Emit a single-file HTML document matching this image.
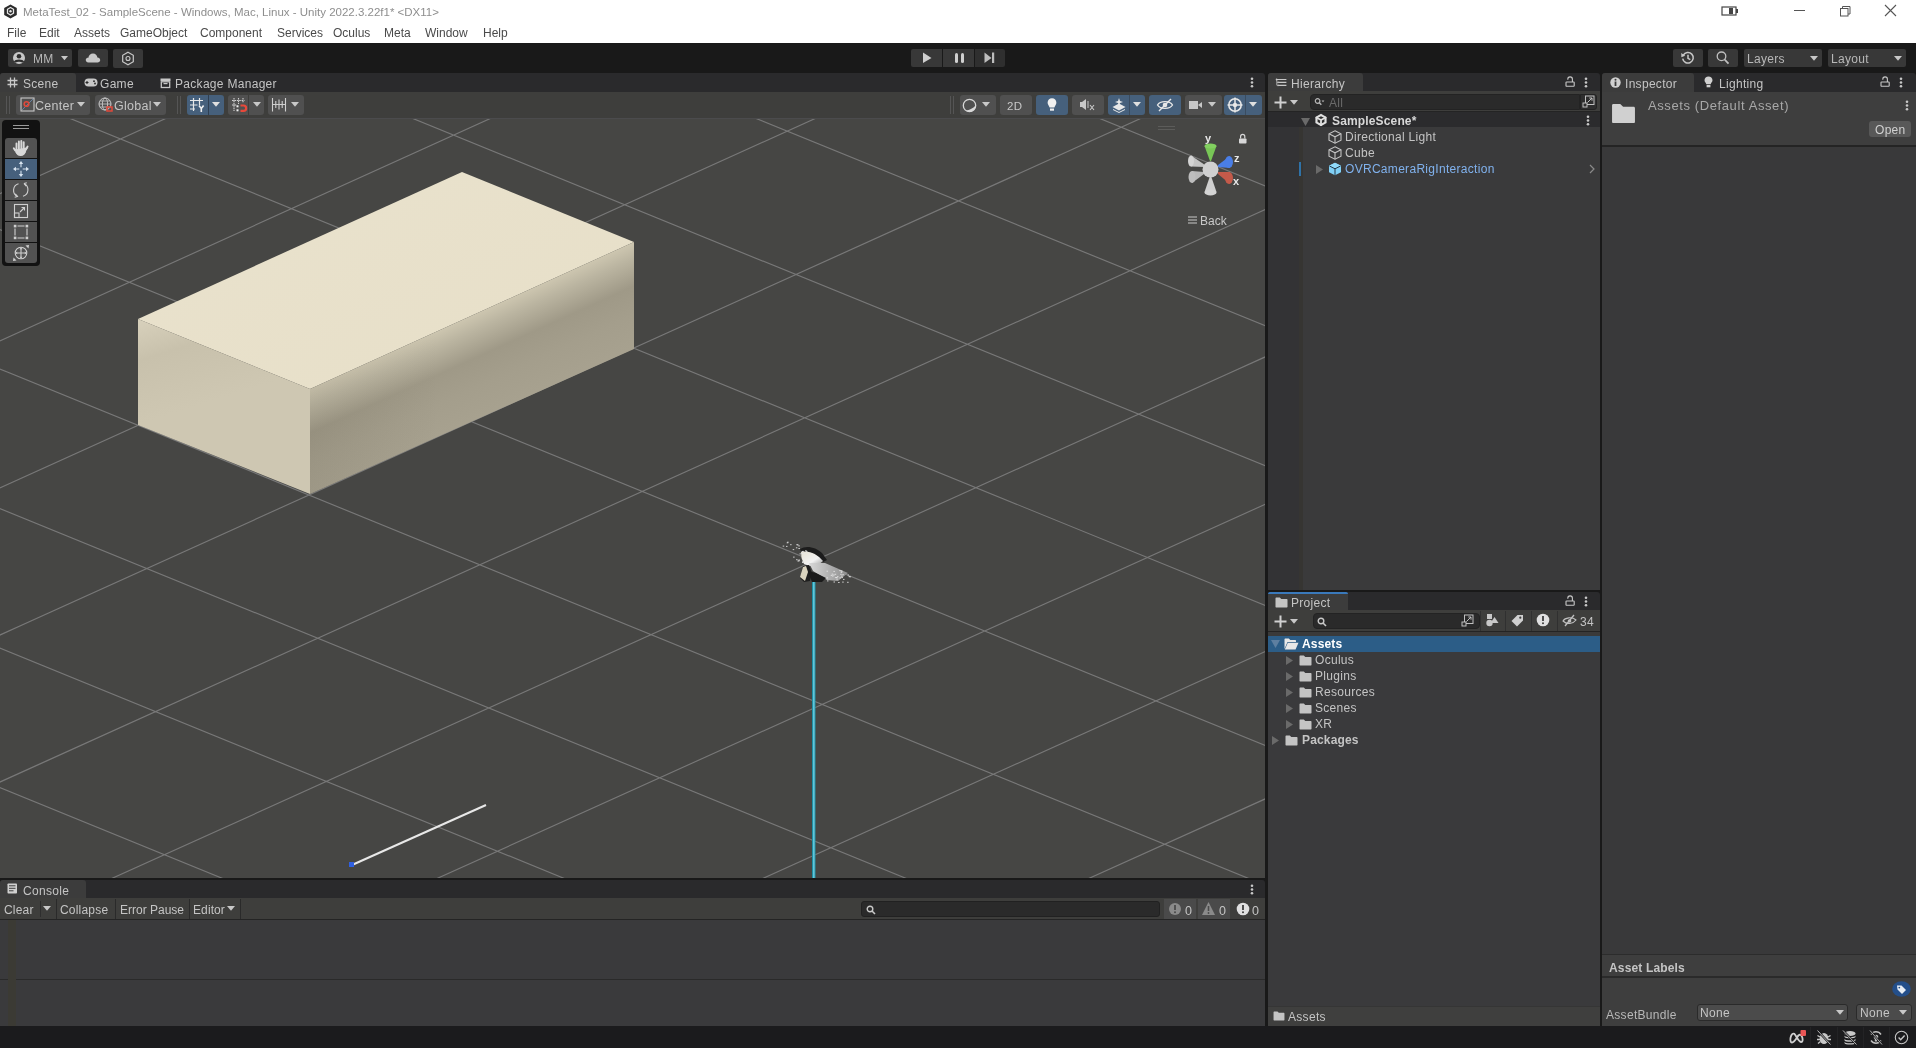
<!DOCTYPE html>
<html><head><meta charset="utf-8"><style>
html,body{margin:0;padding:0;}
body{width:1916px;height:1048px;position:relative;overflow:hidden;background:#191919;font-family:'Liberation Sans',sans-serif;}
.b{position:absolute;}
.t{position:absolute;white-space:nowrap;line-height:1.15;will-change:transform;}
svg.b{overflow:visible;will-change:transform;}
</style></head><body>
<div class="b" style="left:0px;top:0px;width:1916px;height:43px;background:#ffffff;"></div>
<svg class="b" style="left:3px;top:4px" width="15" height="15" viewBox="0 0 15 15">
<polygon points="7.5,0.5 13.8,4 13.8,11 7.5,14.5 1.2,11 1.2,4" fill="#2b2b2b"/>
<polygon points="7.5,3.5 10.5,5.3 10.5,9.2 7.5,11 4.5,9.2 4.5,5.3" fill="none" stroke="#e8e8e8" stroke-width="1.3"/>
<circle cx="7.5" cy="7.3" r="1.2" fill="#e8e8e8"/></svg>
<div class="t" style="left:23px;top:6px;font-size:11.5px;color:#8e8e8e;font-weight:normal;letter-spacing:0px;">MetaTest_02 - SampleScene - Windows, Mac, Linux - Unity 2022.3.22f1* &lt;DX11&gt;</div>
<div class="t" style="left:7.3px;top:27px;font-size:12px;color:#4a4a4a;font-weight:normal;letter-spacing:0px;">File</div>
<div class="t" style="left:39px;top:27px;font-size:12px;color:#4a4a4a;font-weight:normal;letter-spacing:0px;">Edit</div>
<div class="t" style="left:73.5px;top:27px;font-size:12px;color:#4a4a4a;font-weight:normal;letter-spacing:0px;">Assets</div>
<div class="t" style="left:120px;top:27px;font-size:12px;color:#4a4a4a;font-weight:normal;letter-spacing:0px;">GameObject</div>
<div class="t" style="left:200px;top:27px;font-size:12px;color:#4a4a4a;font-weight:normal;letter-spacing:0px;">Component</div>
<div class="t" style="left:277px;top:27px;font-size:12px;color:#4a4a4a;font-weight:normal;letter-spacing:0px;">Services</div>
<div class="t" style="left:333px;top:27px;font-size:12px;color:#4a4a4a;font-weight:normal;letter-spacing:0px;">Oculus</div>
<div class="t" style="left:384px;top:27px;font-size:12px;color:#4a4a4a;font-weight:normal;letter-spacing:0px;">Meta</div>
<div class="t" style="left:425px;top:27px;font-size:12px;color:#4a4a4a;font-weight:normal;letter-spacing:0px;">Window</div>
<div class="t" style="left:483.3px;top:27px;font-size:12px;color:#4a4a4a;font-weight:normal;letter-spacing:0px;">Help</div>
<svg class="b" style="left:1720px;top:4px" width="20" height="14" viewBox="0 0 20 14">
<rect x="2" y="3" width="14" height="8" fill="none" stroke="#444" stroke-width="1.2"/><rect x="9" y="4" width="4" height="6" fill="#444"/><rect x="16" y="5" width="2" height="4" fill="#444"/></svg>
<div class="b" style="left:1794px;top:10px;width:11px;height:1px;background:#555;"></div>
<svg class="b" style="left:1838px;top:4px" width="14" height="14" viewBox="0 0 14 14">
<rect x="2.5" y="4.5" width="7.5" height="7.5" fill="none" stroke="#555" stroke-width="1"/><path d="M4.5 4.5V2.5H12V10H10" fill="none" stroke="#555" stroke-width="1"/></svg>
<svg class="b" style="left:1883px;top:3px" width="15" height="15" viewBox="0 0 15 15">
<path d="M2 2L13 13M13 2L2 13" stroke="#555" stroke-width="1.1"/></svg>
<div class="b" style="left:0px;top:43px;width:1916px;height:30px;background:#191919;"></div>
<div class="b" style="left:8px;top:49px;width:64px;height:18px;background:#383838;border-radius:2px;"></div>
<svg class="b" style="left:12px;top:51px" width="14" height="14" viewBox="0 0 14 14">
<circle cx="7" cy="7" r="6" fill="#c8c8c8"/><circle cx="7" cy="5.3" r="2.3" fill="#2e2e2e"/><path d="M2.8 11.2C4 9 10 9 11.2 11.2" stroke="#2e2e2e" stroke-width="2.2" fill="none"/></svg>
<div class="t" style="left:33px;top:53px;font-size:12px;color:#b8b8b8;font-weight:normal;letter-spacing:0.3px;">MM</div>
<svg class="b" style="left:61px;top:56px" width="7" height="4.2" viewBox="0 0 7 4.2"><polygon points="0,0 7,0 3.5,4.2" fill="#c8c8c8"/></svg>
<div class="b" style="left:78px;top:49px;width:30px;height:18px;background:#383838;border-radius:2px;"></div>
<svg class="b" style="left:85px;top:52px" width="16" height="12" viewBox="0 0 16 12">
<path d="M3.5 10.5C1.5 10.5 0.5 9 0.8 7.6C1.1 6.3 2.3 5.6 3.4 5.8C3.7 3.3 5.5 1.5 8 1.5C10.5 1.5 12.2 3.4 12.4 5.6C14 5.6 15.3 6.8 15.2 8.3C15.1 9.6 14 10.5 12.6 10.5Z" fill="#c8c8c8"/></svg>
<div class="b" style="left:113px;top:49px;width:30px;height:19px;background:#383838;border-radius:2px;"></div>
<svg class="b" style="left:121px;top:51px" width="14" height="15" viewBox="0 0 14 15">
<polygon points="7,1.3 12.3,4.3 12.3,10.7 7,13.7 1.7,10.7 1.7,4.3" fill="none" stroke="#c8c8c8" stroke-width="1.2"/><circle cx="7" cy="7.5" r="2" fill="none" stroke="#c8c8c8" stroke-width="1.1"/></svg>
<div class="b" style="left:911px;top:49px;width:31px;height:18px;background:#383838;border-radius:2px 0 0 2px;"></div>
<div class="b" style="left:943px;top:49px;width:31px;height:18px;background:#383838;"></div>
<div class="b" style="left:975px;top:49px;width:30px;height:18px;background:#2f2f2f;border-radius:0 2px 2px 0;"></div>
<svg class="b" style="left:922px;top:52px" width="11" height="12" viewBox="0 0 11 12"><polygon points="1,0.5 9.5,6 1,11" fill="#cfcfcf"/></svg>
<div class="b" style="left:954.5px;top:53px;width:3px;height:10px;background:#d0d0d0;border-radius:1.5px;"></div>
<div class="b" style="left:960.5px;top:53px;width:3px;height:10px;background:#d0d0d0;border-radius:1.5px;"></div>
<svg class="b" style="left:984px;top:52px" width="12" height="12" viewBox="0 0 12 12"><polygon points="0.5,0.5 7.5,6 0.5,11" fill="#bdbdbd"/><rect x="8" y="0.5" width="2.2" height="10.5" fill="#bdbdbd"/></svg>
<div class="b" style="left:1673px;top:49px;width:30px;height:18px;background:#383838;border-radius:2px;"></div>
<svg class="b" style="left:1680px;top:50px" width="16" height="16" viewBox="0 0 16 16">
<path d="M3.3 5.2A5.3 5.3 0 1 1 2.7 8.6" fill="none" stroke="#c8c8c8" stroke-width="1.5"/><polygon points="1.2,3 5.2,5.8 1.4,7.2" fill="#c8c8c8"/><path d="M8 4.8V8.3L10.3 9.6" fill="none" stroke="#c8c8c8" stroke-width="1.5"/></svg>
<div class="b" style="left:1708px;top:49px;width:30px;height:18px;background:#383838;border-radius:2px;"></div>
<svg class="b" style="left:1715px;top:50px" width="16" height="16" viewBox="0 0 16 16">
<circle cx="6.5" cy="6.3" r="4.3" fill="none" stroke="#c0c0c0" stroke-width="1.3"/><path d="M9.6 9.5L13.5 13.6" stroke="#c0c0c0" stroke-width="1.8"/></svg>
<div class="b" style="left:1744px;top:49px;width:78px;height:18px;background:#383838;border-radius:2px;"></div>
<div class="t" style="left:1747px;top:53px;font-size:12px;color:#b8b8b8;font-weight:normal;letter-spacing:0.3px;">Layers</div>
<svg class="b" style="left:1810px;top:56px" width="8" height="4.8" viewBox="0 0 8 4.8"><polygon points="0,0 8,0 4.0,4.8" fill="#c8c8c8"/></svg>
<div class="b" style="left:1828px;top:49px;width:78px;height:18px;background:#383838;border-radius:2px;"></div>
<div class="t" style="left:1831px;top:53px;font-size:12px;color:#b8b8b8;font-weight:normal;letter-spacing:0.3px;">Layout</div>
<svg class="b" style="left:1894px;top:56px" width="8" height="4.8" viewBox="0 0 8 4.8"><polygon points="0,0 8,0 4.0,4.8" fill="#c8c8c8"/></svg>
<div class="b" style="left:0px;top:73px;width:1265px;height:19px;background:#2a2a2c;border-radius:3px 3px 0 0;"></div>
<div class="b" style="left:0px;top:73px;width:76px;height:19px;background:#3c3c3c;border-radius:3px 3px 0 0;"></div>
<svg class="b" style="left:7px;top:77px" width="11" height="11" viewBox="0 0 11 11">
<path d="M3.5 0.5V10.5M7.5 0.5V10.5M0.5 3.5H10.5M0.5 7.5H10.5" stroke="#c8c8c8" stroke-width="1.3"/></svg>
<div class="t" style="left:23px;top:78px;font-size:12px;color:#c4c4c4;font-weight:normal;letter-spacing:0.3px;">Scene</div>
<svg class="b" style="left:84px;top:78px" width="14" height="9" viewBox="0 0 14 9">
<rect x="0.5" y="0.5" width="13" height="8" rx="4" fill="#c8c8c8"/><path d="M3 3V6M1.5 4.5H4.5" stroke="#282828" stroke-width="1.1"/><circle cx="10" cy="3.2" r="0.9" fill="#282828"/><circle cx="11" cy="5.5" r="0.9" fill="#282828"/></svg>
<div class="t" style="left:100px;top:78px;font-size:12px;color:#c4c4c4;font-weight:normal;letter-spacing:0.3px;">Game</div>
<svg class="b" style="left:160px;top:78px" width="11" height="10" viewBox="0 0 11 10">
<rect x="0.5" y="0.5" width="10" height="2.5" fill="#c8c8c8"/><rect x="1.3" y="3.8" width="8.4" height="5.7" fill="none" stroke="#c8c8c8" stroke-width="1.3"/><rect x="3.5" y="5" width="4" height="1.2" fill="#c8c8c8"/></svg>
<div class="t" style="left:175px;top:78px;font-size:12px;color:#c4c4c4;font-weight:normal;letter-spacing:0.3px;">Package Manager</div>
<svg class="b" style="left:1250px;top:77px" width="4" height="11" viewBox="0 0 4 11"><circle cx="2" cy="1.7" r="1.3" fill="#c8c8c8"/><circle cx="2" cy="5.5" r="1.3" fill="#c8c8c8"/><circle cx="2" cy="9.3" r="1.3" fill="#c8c8c8"/></svg>
<div class="b" style="left:0px;top:92px;width:1265px;height:25px;background:#3e3e3c;"></div>
<div class="b" style="left:6px;top:96px;width:1px;height:18px;background:#555;"></div>
<div class="b" style="left:9px;top:96px;width:1px;height:18px;background:#555;"></div>
<div class="b" style="left:16px;top:95px;width:74px;height:20px;background:#505050;border-radius:3px;"></div>
<svg class="b" style="left:20px;top:97px" width="15" height="15" viewBox="0 0 15 15">
<rect x="1" y="1" width="13" height="13" fill="none" stroke="#c8c8c8" stroke-width="1.1"/><path d="M2 13L13 2" stroke="#6a8fb8" stroke-width="0.8"/><circle cx="6.5" cy="7" r="2.3" fill="none" stroke="#e0483a" stroke-width="1.6"/></svg>
<div class="t" style="left:35px;top:99px;font-size:12.5px;color:#c4c4c4;font-weight:normal;letter-spacing:0.3px;">Center</div>
<svg class="b" style="left:77px;top:102px" width="8" height="4.8" viewBox="0 0 8 4.8"><polygon points="0,0 8,0 4.0,4.8" fill="#c8c8c8"/></svg>
<div class="b" style="left:95px;top:95px;width:71px;height:20px;background:#505050;border-radius:3px;"></div>
<svg class="b" style="left:98px;top:97px" width="16" height="16" viewBox="0 0 16 16">
<circle cx="7" cy="7" r="6" fill="none" stroke="#c8c8c8" stroke-width="1"/><ellipse cx="7" cy="7" rx="2.6" ry="6" fill="none" stroke="#c8c8c8" stroke-width="0.9"/><path d="M1 7H13M2 4H12M2 10H12" stroke="#c8c8c8" stroke-width="0.8"/><rect x="9" y="10" width="5" height="4" fill="none" stroke="#e0483a" stroke-width="1.5"/></svg>
<div class="t" style="left:114px;top:99px;font-size:12.5px;color:#c4c4c4;font-weight:normal;letter-spacing:0.3px;">Global</div>
<svg class="b" style="left:153px;top:102px" width="8" height="4.8" viewBox="0 0 8 4.8"><polygon points="0,0 8,0 4.0,4.8" fill="#c8c8c8"/></svg>
<div class="b" style="left:177px;top:96px;width:1px;height:18px;background:#555555;"></div>
<div class="b" style="left:180px;top:96px;width:1px;height:18px;background:#555555;"></div>
<div class="b" style="left:187px;top:95px;width:37px;height:20px;background:#46607c;border-radius:3px;"></div>
<div class="b" style="left:208px;top:95px;width:1px;height:20px;background:#2f3f52;"></div>
<svg class="b" style="left:189px;top:97px" width="18" height="16" viewBox="0 0 18 16">
<path d="M4.5 1V14M10.5 1V8M1 3.5H14M1 8H8.5M1 12H6" stroke="#e8e8e8" stroke-width="1.2"/><path d="M10 8.5L12.3 11.5L14.6 8.5M12.3 11.5V15" stroke="#f0f0f0" stroke-width="1.6" fill="none"/></svg>
<svg class="b" style="left:212px;top:102px" width="8" height="4.8" viewBox="0 0 8 4.8"><polygon points="0,0 8,0 4.0,4.8" fill="#e0e0e0"/></svg>
<div class="b" style="left:228px;top:95px;width:36px;height:20px;background:#505050;border-radius:3px;"></div>
<div class="b" style="left:248px;top:95px;width:1px;height:20px;background:#3e3e3c;"></div>
<svg class="b" style="left:231px;top:97px" width="16" height="16" viewBox="0 0 16 16">
<path d="M3 1V14M7.5 1V7M12 1V6M1 3.5H13.5M1 8H6" stroke="#cfcfcf" stroke-width="1.1" stroke-dasharray="1.6 0.8"/><rect x="5.5" y="8.3" width="2" height="2" fill="#f0f0f0"/><rect x="5.5" y="12.3" width="2" height="2" fill="#f0f0f0"/><path d="M9.5 8.5H12.5A2.6 2.6 0 0 1 12.5 13.8H9.5" stroke="#e8483a" stroke-width="2.2" fill="none"/></svg>
<svg class="b" style="left:253px;top:102px" width="8" height="4.8" viewBox="0 0 8 4.8"><polygon points="0,0 8,0 4.0,4.8" fill="#c8c8c8"/></svg>
<div class="b" style="left:268px;top:95px;width:36px;height:20px;background:#505050;border-radius:3px;"></div>
<svg class="b" style="left:271px;top:97px" width="16" height="16" viewBox="0 0 16 16">
<path d="M1.5 1V14.5M14.5 1V14.5M1.5 7.5H14.5M4.8 4V11M8 2.5V12.5M11.2 4V11" stroke="#cfcfcf" stroke-width="1.1"/></svg>
<svg class="b" style="left:291px;top:102px" width="8" height="4.8" viewBox="0 0 8 4.8"><polygon points="0,0 8,0 4.0,4.8" fill="#c8c8c8"/></svg>
<div class="b" style="left:950px;top:96px;width:1px;height:18px;background:#555;"></div>
<div class="b" style="left:953px;top:96px;width:1px;height:18px;background:#555;"></div>
<div class="b" style="left:960px;top:95px;width:36px;height:20px;background:#505050;border-radius:3px;"></div>
<svg class="b" style="left:962px;top:98px" width="16" height="15" viewBox="0 0 16 15">
<circle cx="7.5" cy="7.5" r="6.2" fill="none" stroke="#d8d8d8" stroke-width="1.3"/><path d="M4 12.5A6 6 0 0 0 13.6 7.2C12 10 7 12 4 12.5Z" fill="#d8d8d8"/></svg>
<svg class="b" style="left:982px;top:102px" width="8" height="4.8" viewBox="0 0 8 4.8"><polygon points="0,0 8,0 4.0,4.8" fill="#c8c8c8"/></svg>
<div class="b" style="left:1000px;top:95px;width:32px;height:20px;background:#505050;border-radius:3px;"></div>
<div class="t" style="left:1007px;top:100px;font-size:11.5px;color:#c8c8c8;font-weight:normal;letter-spacing:0.3px;">2D</div>
<div class="b" style="left:1036px;top:95px;width:32px;height:20px;background:#46607c;border-radius:3px;"></div>
<svg class="b" style="left:1046px;top:97px" width="12" height="16" viewBox="0 0 12 16">
<path d="M6 1.3C3.4 1.3 1.6 3.3 1.6 5.7C1.6 7.7 3.3 8.8 3.6 10.6H8.4C8.7 8.8 10.4 7.7 10.4 5.7C10.4 3.3 8.6 1.3 6 1.3Z" fill="#f0f0f0"/><rect x="4" y="11.5" width="4" height="2.2" fill="#f0f0f0"/></svg>
<div class="b" style="left:1072px;top:95px;width:32px;height:20px;background:#505050;border-radius:3px;"></div>
<svg class="b" style="left:1079px;top:98px" width="18" height="14" viewBox="0 0 18 14">
<rect x="1" y="4" width="2" height="5" fill="#c8c8c8"/><polygon points="3,4 7,1 7,12 3,9" fill="#c8c8c8"/><path d="M9 3V10" stroke="#c8c8c8" stroke-width="1"/><path d="M11 7L15 12M15 7L11 12" stroke="#c8c8c8" stroke-width="1.1"/></svg>
<div class="b" style="left:1108px;top:95px;width:37px;height:20px;background:#46607c;border-radius:3px;"></div>
<div class="b" style="left:1129px;top:95px;width:1px;height:20px;background:#3a4c60;"></div>
<svg class="b" style="left:1111px;top:97px" width="16" height="16" viewBox="0 0 16 16">
<path d="M1.5 10L8 13.5L14.5 10L8 6.5Z" fill="#e8e8e8"/><path d="M2 12.5L8 15.5L14 12.5" stroke="#e8e8e8" stroke-width="1" fill="none"/><path d="M8 1L9 4L12 5L9 6L8 9L7 6L4 5L7 4Z" fill="#e8e8e8"/></svg>
<svg class="b" style="left:1133px;top:102px" width="8" height="4.8" viewBox="0 0 8 4.8"><polygon points="0,0 8,0 4.0,4.8" fill="#e0e0e0"/></svg>
<div class="b" style="left:1149px;top:95px;width:32px;height:20px;background:#46607c;border-radius:3px;"></div>
<svg class="b" style="left:1156px;top:98px" width="18" height="14" viewBox="0 0 18 14">
<path d="M1.5 7C4 2.5 14 2.5 16.5 7C14 11.5 4 11.5 1.5 7Z" fill="none" stroke="#e8e8e8" stroke-width="1.3"/><circle cx="9" cy="7" r="2.3" fill="#e8e8e8"/><path d="M3 13L15 1" stroke="#e8e8e8" stroke-width="1.4"/></svg>
<div class="b" style="left:1185px;top:95px;width:37px;height:20px;background:#505050;border-radius:3px;"></div>
<svg class="b" style="left:1188px;top:99px" width="16" height="12" viewBox="0 0 16 12">
<rect x="1" y="2" width="9" height="8" fill="#c8c8c8"/><polygon points="10,6 14,3 14,9" fill="#c8c8c8"/></svg>
<svg class="b" style="left:1208px;top:102px" width="8" height="4.8" viewBox="0 0 8 4.8"><polygon points="0,0 8,0 4.0,4.8" fill="#c8c8c8"/></svg>
<div class="b" style="left:1224px;top:95px;width:38px;height:20px;background:#46607c;border-radius:3px;"></div>
<div class="b" style="left:1245px;top:95px;width:1px;height:20px;background:#3a4c60;"></div>
<svg class="b" style="left:1227px;top:97px" width="16" height="16" viewBox="0 0 16 16">
<circle cx="8" cy="8" r="6.2" fill="none" stroke="#e8e8e8" stroke-width="1.6"/><path d="M8 0.5V15.5M0.5 8H15.5" stroke="#e8e8e8" stroke-width="1.5"/><circle cx="8" cy="8" r="2.2" fill="#e8e8e8"/></svg>
<svg class="b" style="left:1249px;top:102px" width="8" height="4.8" viewBox="0 0 8 4.8"><polygon points="0,0 8,0 4.0,4.8" fill="#e0e0e0"/></svg>
<svg class="b" style="left:0px;top:117px;overflow:hidden" width="1265" height="761" viewBox="0 0 1265 761">
<rect width="1265" height="761" fill="#464644"/>
<path d="M-2.0 669.7L226.4 763.0M-2.0 530.2L568.0 763.0M-2.0 390.7L910.0 763.0M-2.0 251.2L1252.4 763.0M-2.0 111.7L1267.0 629.1M61.6 -2.0L1267.0 489.3M404.3 -2.0L1267.0 349.4M747.5 -2.0L1267.0 209.5M1091.2 -2.0L1267.0 69.6M-2.0 77.6L173.4 -2.0M-2.0 224.8L498.0 -2.0M-2.0 371.9L822.9 -2.0M-2.0 518.9L1148.3 -2.0M-2.0 665.9L1267.0 91.7M108.4 763.0L1267.0 239.1M433.7 763.0L1267.0 386.4M759.4 763.0L1267.0 533.8M1085.4 763.0L1267.0 681.1" stroke="#787878" stroke-width="1.15" fill="none"/>
<defs>
<linearGradient id="gtop" x1="0" y1="0" x2="1" y2="1"><stop offset="0" stop-color="#e9e2cd"/><stop offset="1" stop-color="#e7dfc8"/></linearGradient>
<linearGradient id="gleft" gradientUnits="userSpaceOnUse" x1="138" y1="202" x2="168" y2="298"><stop offset="0" stop-color="#d8d1bc"/><stop offset="0.4" stop-color="#c8c1ac"/><stop offset="1" stop-color="#cec7b2"/></linearGradient>
<linearGradient id="gright" gradientUnits="userSpaceOnUse" x1="310" y1="272" x2="349.5" y2="359"><stop offset="0" stop-color="#cdc6b0"/><stop offset="0.15" stop-color="#bbb5a1"/><stop offset="0.42" stop-color="#9f9987"/><stop offset="0.7" stop-color="#a49e8c"/><stop offset="1" stop-color="#a7a18f"/></linearGradient>
<linearGradient id="gright2" gradientUnits="userSpaceOnUse" x1="310" y1="0" x2="440" y2="0"><stop offset="0" stop-color="#302c20" stop-opacity="0.08"/><stop offset="1" stop-color="#302c20" stop-opacity="0"/></linearGradient>
</defs>
<polygon points="462,55 634,125 310,272 138,202" fill="url(#gtop)"/>
<polygon points="138,202 310,272 310,377 138,308" fill="url(#gleft)"/>
<polygon points="310,272 634,125 634,232 310,377" fill="url(#gright)"/>
<polygon points="310,272 634,125 634,232 310,377" fill="url(#gright2)"/>
<path d="M352 748L486 688" stroke="#e8e8e8" stroke-width="2"/><rect x="349" y="745" width="5" height="5" fill="#3060e0"/><rect x="812" y="459" width="3.5" height="302" fill="#2090a4"/><rect x="813" y="459" width="1.6" height="302" fill="#62c6da"/><g transform="translate(0,-117)">
<defs><linearGradient id="gw" x1="0" y1="0" x2="1" y2="1"><stop offset="0" stop-color="#e6e2d4"/><stop offset="0.6" stop-color="#f2f2f2"/><stop offset="1" stop-color="#9a9a9a"/></linearGradient>
<linearGradient id="gwing" x1="0" y1="0" x2="1" y2="0"><stop offset="0" stop-color="#d8d8d8"/><stop offset="1" stop-color="#8c8c8c"/></linearGradient></defs>
<path d="M800 549C806 545 816 547 822 553L827 560L823 562C818 556 810 550 801 552Z" fill="#1c1c1c"/>
<path d="M801 552C809 550 817 554 823 561L818 565L810 566L804 564L801.5 558Z" fill="url(#gw)"/>
<path d="M803 566L809 565L812 573L810 581L804 582L800 578Z" fill="#1e1e1e"/>
<path d="M800 577L803 567L806 566L808 572L805 581Z" fill="#d9d3be"/>
<path d="M809 563L825 563L848 573L838 581L827 580L813 571Z" fill="url(#gwing)"/>
<path d="M808 571L816 573L826 578L822 582L812 582Z" fill="#1a1a1a"/>
<rect x="786.0" y="545.9" width="1.5" height="1" fill="#e8e8e8" opacity="0.85"/><rect x="805.9" y="550.9" width="1.5" height="1" fill="#e8e8e8" opacity="0.85"/><rect x="801.6" y="551.0" width="1.5" height="1" fill="#e8e8e8" opacity="0.85"/><rect x="796.3" y="544.2" width="1.5" height="1" fill="#e8e8e8" opacity="0.85"/><rect x="796.1" y="559.2" width="1.5" height="1" fill="#e8e8e8" opacity="0.85"/><rect x="793.1" y="556.6" width="1.5" height="1" fill="#e8e8e8" opacity="0.85"/><rect x="799.5" y="553.4" width="1.5" height="1" fill="#e8e8e8" opacity="0.85"/><rect x="787.1" y="541.7" width="1.5" height="1" fill="#e8e8e8" opacity="0.85"/><rect x="802.4" y="550.9" width="1.5" height="1" fill="#e8e8e8" opacity="0.85"/><rect x="798.4" y="559.5" width="1.5" height="1" fill="#e8e8e8" opacity="0.85"/><rect x="798.3" y="560.3" width="1.5" height="1" fill="#e8e8e8" opacity="0.85"/><rect x="782.7" y="545.6" width="1.5" height="1" fill="#e8e8e8" opacity="0.85"/><rect x="805.1" y="550.2" width="1.5" height="1" fill="#e8e8e8" opacity="0.85"/><rect x="795.9" y="547.3" width="1.5" height="1" fill="#e8e8e8" opacity="0.85"/><rect x="792.7" y="549.1" width="1.5" height="1" fill="#e8e8e8" opacity="0.85"/><rect x="797.4" y="560.5" width="1.5" height="1" fill="#e8e8e8" opacity="0.85"/><rect x="802.1" y="561.8" width="1.5" height="1" fill="#e8e8e8" opacity="0.85"/><rect x="797.1" y="544.4" width="1.5" height="1" fill="#e8e8e8" opacity="0.85"/><rect x="802.2" y="561.3" width="1.5" height="1" fill="#e8e8e8" opacity="0.85"/><rect x="803.4" y="553.0" width="1.5" height="1" fill="#e8e8e8" opacity="0.85"/><rect x="798.3" y="545.4" width="1.5" height="1" fill="#e8e8e8" opacity="0.85"/><rect x="801.5" y="553.0" width="1.5" height="1" fill="#e8e8e8" opacity="0.85"/><rect x="786.7" y="542.3" width="1.5" height="1" fill="#e8e8e8" opacity="0.85"/><rect x="802.1" y="561.8" width="1.5" height="1" fill="#e8e8e8" opacity="0.85"/><rect x="790.1" y="544.2" width="1.5" height="1" fill="#e8e8e8" opacity="0.85"/><rect x="798.4" y="548.0" width="1.5" height="1" fill="#e8e8e8" opacity="0.85"/><rect x="847.1" y="581.8" width="1.5" height="1" fill="#e8e8e8" opacity="0.85"/><rect x="838.1" y="582.0" width="1.5" height="1" fill="#e8e8e8" opacity="0.85"/><rect x="833.4" y="570.9" width="1.5" height="1" fill="#e8e8e8" opacity="0.85"/><rect x="840.4" y="570.4" width="1.5" height="1" fill="#e8e8e8" opacity="0.85"/><rect x="830.7" y="574.9" width="1.5" height="1" fill="#e8e8e8" opacity="0.85"/><rect x="840.7" y="571.9" width="1.5" height="1" fill="#e8e8e8" opacity="0.85"/><rect x="827.0" y="580.4" width="1.5" height="1" fill="#e8e8e8" opacity="0.85"/><rect x="833.5" y="581.5" width="1.5" height="1" fill="#e8e8e8" opacity="0.85"/><rect x="847.5" y="574.5" width="1.5" height="1" fill="#e8e8e8" opacity="0.85"/><rect x="837.0" y="576.2" width="1.5" height="1" fill="#e8e8e8" opacity="0.85"/><rect x="841.5" y="577.1" width="1.5" height="1" fill="#e8e8e8" opacity="0.85"/><rect x="839.4" y="577.4" width="1.5" height="1" fill="#e8e8e8" opacity="0.85"/><rect x="848.6" y="576.1" width="1.5" height="1" fill="#e8e8e8" opacity="0.85"/><rect x="836.3" y="578.6" width="1.5" height="1" fill="#e8e8e8" opacity="0.85"/><rect x="831.7" y="573.6" width="1.5" height="1" fill="#e8e8e8" opacity="0.85"/><rect x="849.5" y="576.3" width="1.5" height="1" fill="#e8e8e8" opacity="0.85"/><rect x="839.2" y="570.1" width="1.5" height="1" fill="#e8e8e8" opacity="0.85"/><rect x="836.0" y="577.0" width="1.5" height="1" fill="#e8e8e8" opacity="0.85"/><rect x="826.5" y="577.4" width="1.5" height="1" fill="#e8e8e8" opacity="0.85"/><rect x="841.2" y="570.7" width="1.5" height="1" fill="#e8e8e8" opacity="0.85"/><rect x="841.1" y="575.6" width="1.5" height="1" fill="#e8e8e8" opacity="0.85"/><rect x="842.3" y="574.2" width="1.5" height="1" fill="#e8e8e8" opacity="0.85"/><rect x="843.0" y="578.9" width="1.5" height="1" fill="#e8e8e8" opacity="0.85"/><rect x="826.5" y="570.7" width="1.5" height="1" fill="#e8e8e8" opacity="0.85"/><rect x="842.2" y="581.6" width="1.5" height="1" fill="#e8e8e8" opacity="0.85"/><rect x="832.0" y="575.5" width="1.5" height="1" fill="#e8e8e8" opacity="0.85"/><rect x="840.2" y="573.8" width="1.5" height="1" fill="#e8e8e8" opacity="0.85"/><rect x="834.7" y="573.8" width="1.5" height="1" fill="#e8e8e8" opacity="0.85"/><rect x="834.9" y="577.1" width="1.5" height="1" fill="#e8e8e8" opacity="0.85"/><rect x="833.2" y="574.5" width="1.5" height="1" fill="#e8e8e8" opacity="0.85"/>
</g>
<g transform="translate(0,-117)">
<polygon points="1191,155.5 1191,166.5 1205,167 1205,165" fill="#c4c4c4"/><ellipse cx="1191" cy="161" rx="3" ry="5.5" fill="#d4d4d4"/>
<polygon points="1192,171 1192,183 1204,174 1204,172" fill="#b8b8b8"/><ellipse cx="1192" cy="177" rx="3.5" ry="6" fill="#bdbdbd"/>
<polygon points="1204.5,192 1216.5,192 1211,176 1210,176" fill="#cfcfcf"/><ellipse cx="1210.5" cy="192.5" rx="6" ry="3" fill="#d4d4d4"/>
<circle cx="1210.5" cy="169.5" r="8" fill="#d0d0d0"/>
<polygon points="1204.5,146 1216.5,146 1211,161 1210,161" fill="#78c656"/><ellipse cx="1210.5" cy="146" rx="6" ry="2.5" fill="#82d060"/>
<polygon points="1230,156 1230,168 1218,167 1218,165" fill="#4a7ee6"/><ellipse cx="1229" cy="162" rx="4" ry="6" fill="#4a7ee6"/>
<polygon points="1230,172 1230,184 1218,174 1218,172" fill="#c45a4a"/><ellipse cx="1229" cy="178" rx="4" ry="6" fill="#c45a4a"/>
</g>
<text x="1205" y="25" font-size="11" fill="#e8e8e8" font-family="Liberation Sans" font-weight="bold">y</text>
<text x="1234" y="45" font-size="11" fill="#e8e8e8" font-family="Liberation Sans" font-weight="bold">z</text>
<text x="1233" y="68" font-size="11" fill="#e8e8e8" font-family="Liberation Sans" font-weight="bold">x</text>
<rect x="1239" y="21.5" width="7.5" height="5" rx="0.8" fill="#d8d8d8"/>
<path d="M1240.6 21.5V19.5A2.1 2.1 0 0 1 1244.8 19.5V21.5" stroke="#d8d8d8" stroke-width="1.2" fill="none"/>
<path d="M1188 100H1197M1188 103H1197M1188 106H1197" stroke="#c8c8c8" stroke-width="1"/>
<text x="1200" y="107.5" font-size="12" fill="#c8c8c8" font-family="Liberation Sans">Back</text>
<rect x="0" y="0" width="1265" height="1" fill="#3e3e3c"/><rect x="0" y="1" width="1265" height="1" fill="#4b4b4d"/><path d="M1158 9.5H1175M1158 12.5H1175" stroke="#5c5c5a" stroke-width="1"/></svg><div class="b" style="left:2px;top:120px;width:38px;height:146px;background:#121212;border-radius:4px;"></div><div class="b" style="left:13px;top:125px;width:16px;height:1px;background:#9a9a9a;"></div><div class="b" style="left:13px;top:128px;width:16px;height:1px;background:#9a9a9a;"></div><div class="b" style="left:5px;top:138px;width:32px;height:20px;background:#525252;border-radius:3px 3px 0 0;"></div><div class="b" style="left:5px;top:159px;width:32px;height:20px;background:#46607c;border-radius:0;"></div><div class="b" style="left:5px;top:180px;width:32px;height:20px;background:#525252;border-radius:0;"></div><div class="b" style="left:5px;top:201px;width:32px;height:20px;background:#525252;border-radius:0;"></div><div class="b" style="left:5px;top:222px;width:32px;height:20px;background:#525252;border-radius:0;"></div><div class="b" style="left:5px;top:243px;width:32px;height:20px;background:#525252;border-radius:0 0 3px 3px;"></div><svg class="b" style="left:12px;top:139px" width="18" height="18" viewBox="0 0 18 18">
<path d="M4.2 10.5C3.5 13 5 16.5 8.5 16.5C11.5 16.5 13 14.5 13.5 12L15.5 8.3" stroke="#d8d8d8" stroke-width="1.2" fill="#d8d8d8"/>
<path d="M4.5 13V4.5M6.9 11V2.5M9.3 11V2M11.7 11.5V3.3M14.3 9.8L15.6 7.6M3.2 11.5L1.8 9.3" stroke="#d8d8d8" stroke-width="1.9" stroke-linecap="round"/>
<path d="M4.4 10.5H13.4V14H4.4Z" fill="#d8d8d8"/></svg>
<svg class="b" style="left:12px;top:160px" width="18" height="18" viewBox="0 0 18 18">
<path d="M9 3.5V7.3M9 10.7V14.5M3.5 9H7.3M10.7 9H14.5" stroke="#d8e4f0" stroke-width="1.1"/><polygon points="9,1 11.2,4 6.8,4" fill="#d8e4f0"/><polygon points="9,17 11.2,14 6.8,14" fill="#d8e4f0"/><polygon points="1,9 4,6.8 4,11.2" fill="#d8e4f0"/><polygon points="17,9 14,6.8 14,11.2" fill="#d8e4f0"/></svg>
<svg class="b" style="left:12px;top:181px" width="18" height="18" viewBox="0 0 18 18">
<path d="M5.5 15.5A6.8 6.8 0 0 1 6.5 2.8M12 2.5A6.8 6.8 0 0 1 11 15.2" stroke="#d0d0d0" stroke-width="1.1" fill="none"/><path d="M3.3 12.8L5.5 15.5L2.7 16.2M12 2.5L14.8 1.8M12 2.5L14.2 5.2" stroke="#d0d0d0" stroke-width="1.1" fill="none"/></svg>
<svg class="b" style="left:13px;top:203px" width="16" height="16" viewBox="0 0 16 16">
<rect x="1.5" y="1.5" width="13" height="13" fill="none" stroke="#d0d0d0" stroke-width="1.1"/><rect x="1.5" y="10" width="4.5" height="4.5" fill="none" stroke="#d0d0d0" stroke-width="1.1"/><path d="M7 9L11.5 4.5M8.5 4.5H11.5V7.5" stroke="#d0d0d0" stroke-width="1.1" fill="none"/></svg>
<svg class="b" style="left:13px;top:224px" width="16" height="16" viewBox="0 0 16 16">
<path d="M4.5 2H11.5M4.5 14H11.5M2 4.5V11.5M14 4.5V11.5" stroke="#d0d0d0" stroke-width="1.1" fill="none"/><rect x="0.8" y="0.8" width="2.6" height="2.6" fill="#d0d0d0"/><rect x="12.6" y="0.8" width="2.6" height="2.6" fill="#d0d0d0"/><rect x="0.8" y="12.6" width="2.6" height="2.6" fill="#d0d0d0"/><rect x="12.6" y="12.6" width="2.6" height="2.6" fill="#d0d0d0"/></svg>
<svg class="b" style="left:12px;top:244px" width="18" height="18" viewBox="0 0 18 18">
<circle cx="9" cy="9" r="5.8" fill="none" stroke="#d0d0d0" stroke-width="1.1"/><path d="M9 4.5V13.5M4.5 9H13.5" stroke="#d0d0d0" stroke-width="1.1"/><polygon points="9,3.2 10.5,5.2 7.5,5.2" fill="#d0d0d0"/><polygon points="9,14.8 10.5,12.8 7.5,12.8" fill="#d0d0d0"/><polygon points="3.2,9 5.2,7.5 5.2,10.5" fill="#d0d0d0"/><polygon points="14.8,9 12.8,7.5 12.8,10.5" fill="#d0d0d0"/><polygon points="1,17 1.5,13.5 4.5,16.5" fill="#d0d0d0"/><polygon points="17,1 16.5,4.5 13.5,1.5" fill="#d0d0d0"/></svg>
<div class="b" style="left:0px;top:880px;width:1265px;height:18px;background:#2a2a2c;border-radius:3px 3px 0 0;"></div>
<div class="b" style="left:0px;top:880px;width:86px;height:18px;background:#3c3c3c;border-radius:3px 3px 0 0;"></div>
<svg class="b" style="left:7px;top:883px" width="11" height="11" viewBox="0 0 11 11">
<rect x="0.5" y="0.5" width="9.5" height="10" rx="0.8" fill="#d0d0d0"/><path d="M2 2.8H8.5M2 5.3H8.5M2 7.8H6.5" stroke="#3c3c3c" stroke-width="1"/></svg>
<div class="t" style="left:23px;top:885px;font-size:12px;color:#c4c4c4;font-weight:normal;letter-spacing:0.3px;">Console</div>
<svg class="b" style="left:1250px;top:884px" width="4" height="11" viewBox="0 0 4 11"><circle cx="2" cy="1.7" r="1.3" fill="#c8c8c8"/><circle cx="2" cy="5.5" r="1.3" fill="#c8c8c8"/><circle cx="2" cy="9.3" r="1.3" fill="#c8c8c8"/></svg>
<div class="b" style="left:0px;top:898px;width:1265px;height:22px;background:#3e3e3c;"></div>
<div class="b" style="left:0px;top:919px;width:1265px;height:1px;background:#242424;"></div>
<div class="t" style="left:4px;top:904px;font-size:12px;color:#c4c4c4;font-weight:normal;letter-spacing:0.2px;">Clear</div>
<div class="b" style="left:40px;top:901px;width:1px;height:16px;background:#2e2e2e;"></div>
<svg class="b" style="left:43px;top:906px" width="8" height="4.8" viewBox="0 0 8 4.8"><polygon points="0,0 8,0 4.0,4.8" fill="#c8c8c8"/></svg>
<div class="b" style="left:56px;top:899px;width:1px;height:20px;background:#2a2a2a;"></div>
<div class="t" style="left:60px;top:904px;font-size:12px;color:#c4c4c4;font-weight:normal;letter-spacing:0.2px;">Collapse</div>
<div class="b" style="left:115px;top:899px;width:1px;height:20px;background:#2a2a2a;"></div>
<div class="t" style="left:120px;top:904px;font-size:12px;color:#c4c4c4;font-weight:normal;letter-spacing:0px;">Error Pause</div>
<div class="b" style="left:189px;top:899px;width:1px;height:20px;background:#2a2a2a;"></div>
<div class="t" style="left:193px;top:904px;font-size:12px;color:#c4c4c4;font-weight:normal;letter-spacing:0.1px;">Editor</div>
<svg class="b" style="left:227px;top:906px" width="8" height="4.8" viewBox="0 0 8 4.8"><polygon points="0,0 8,0 4.0,4.8" fill="#c8c8c8"/></svg>
<div class="b" style="left:240px;top:899px;width:1px;height:20px;background:#2a2a2a;"></div>
<div class="b" style="left:861px;top:901px;width:299px;height:16px;background:#2a2a2a;border-radius:3px;border:1px solid #212121;box-sizing:border-box;"></div>
<svg class="b" style="left:866px;top:905px" width="10" height="10" viewBox="0 0 10 10"><circle cx="4" cy="4" r="2.8" fill="none" stroke="#c8c8c8" stroke-width="1.4"/><path d="M6 6L9 9" stroke="#c8c8c8" stroke-width="1.6"/></svg>
<div class="b" style="left:1164px;top:899px;width:32px;height:20px;background:#4a4a4a;"></div>
<div class="b" style="left:1198px;top:899px;width:32px;height:20px;background:#4a4a4a;"></div>
<svg class="b" style="left:1168px;top:902px" width="14" height="14" viewBox="0 0 14 14"><circle cx="7" cy="7" r="6" fill="#8a8a8a"/><path d="M7 3V8" stroke="#4a4a4a" stroke-width="1.8"/><circle cx="7" cy="10.3" r="1" fill="#4a4a4a"/></svg>
<div class="t" style="left:1185px;top:904px;font-size:12.5px;color:#c4c4c4;font-weight:normal;letter-spacing:0.3px;">0</div>
<svg class="b" style="left:1201px;top:901px" width="15" height="15" viewBox="0 0 15 15"><polygon points="7.5,1 14,14 1,14" fill="#8a8a8a"/><path d="M7.5 5V10" stroke="#4a4a4a" stroke-width="1.6"/><circle cx="7.5" cy="12" r="0.9" fill="#4a4a4a"/></svg>
<div class="t" style="left:1219px;top:904px;font-size:12.5px;color:#c4c4c4;font-weight:normal;letter-spacing:0.3px;">0</div>
<svg class="b" style="left:1236px;top:902px" width="14" height="14" viewBox="0 0 14 14"><circle cx="7" cy="7" r="6.3" fill="#e0e0e0"/><path d="M7 3V8" stroke="#3c3c3c" stroke-width="1.8"/><circle cx="7" cy="10.3" r="1" fill="#3c3c3c"/></svg>
<div class="t" style="left:1252px;top:904px;font-size:12.5px;color:#c4c4c4;font-weight:normal;letter-spacing:0.3px;">0</div>
<div class="b" style="left:0px;top:920px;width:1265px;height:59px;background:#3a3a3c;"></div>
<div class="b" style="left:0px;top:979px;width:1265px;height:1px;background:#2a2a2a;"></div>
<div class="b" style="left:0px;top:980px;width:1265px;height:46px;background:#3a3a3c;"></div>
<div class="b" style="left:8px;top:920px;width:8px;height:106px;background:#3b3a34;"></div>
<div class="b" style="left:1268px;top:73px;width:332px;height:18px;background:#2a2a2c;border-radius:3px 3px 0 0;"></div>
<div class="b" style="left:1268px;top:73px;width:95px;height:18px;background:#3c3c3c;border-radius:3px 3px 0 0;"></div>
<svg class="b" style="left:1275px;top:77px" width="12" height="11" viewBox="0 0 12 11">
<path d="M1.2 2.5H11.4M3.2 5.4H11.4M3.2 8.4H11.4" stroke="#c8c8c8" stroke-width="1.1"/><path d="M1.8 2.5V8.4" stroke="#c8c8c8" stroke-width="0.8" fill="none"/><circle cx="1.6" cy="2.5" r="0.9" fill="#c8c8c8"/><circle cx="3" cy="5.4" r="0.8" fill="#c8c8c8"/><circle cx="3" cy="8.4" r="0.8" fill="#c8c8c8"/></svg>
<div class="t" style="left:1291px;top:78px;font-size:12px;color:#c4c4c4;font-weight:normal;letter-spacing:0.3px;">Hierarchy</div>
<svg class="b" style="left:1565px;top:76px" width="10" height="11" viewBox="0 0 10 11"><rect x="1" y="6" width="8.2" height="4.3" rx="0.6" fill="none" stroke="#c8c8c8" stroke-width="1.1"/><path d="M7.4 6V3.2A2.3 2.3 0 0 0 2.8 3.2V3.8" fill="none" stroke="#c8c8c8" stroke-width="1.1"/></svg>
<svg class="b" style="left:1584px;top:77px" width="4" height="11" viewBox="0 0 4 11"><circle cx="2" cy="1.7" r="1.3" fill="#c8c8c8"/><circle cx="2" cy="5.5" r="1.3" fill="#c8c8c8"/><circle cx="2" cy="9.3" r="1.3" fill="#c8c8c8"/></svg>
<div class="b" style="left:1268px;top:91px;width:332px;height:21px;background:#3e3e3c;"></div>
<div class="b" style="left:1268px;top:111px;width:332px;height:1px;background:#242424;"></div>
<svg class="b" style="left:1274px;top:96px" width="13" height="13" viewBox="0 0 13 13"><path d="M6.5 0.5V12.5M0.5 6.5H12.5" stroke="#d0d0d0" stroke-width="2"/></svg>
<svg class="b" style="left:1290px;top:100px" width="8" height="4.8" viewBox="0 0 8 4.8"><polygon points="0,0 8,0 4.0,4.8" fill="#c8c8c8"/></svg>
<div class="b" style="left:1310px;top:94px;width:270px;height:16px;background:#2a2a2a;border-radius:4px 0 0 4px;border:1px solid #232323;box-sizing:border-box;"></div>
<svg class="b" style="left:1314px;top:97px" width="12" height="10" viewBox="0 0 12 10"><circle cx="3.6" cy="4" r="2.3" fill="none" stroke="#b8b8b8" stroke-width="1.2"/><path d="M5.3 5.8L7.3 7.8" stroke="#b8b8b8" stroke-width="1.4"/><polygon points="7.6,3.6 10.4,3.6 9,5.2" fill="#b8b8b8"/></svg>
<div class="t" style="left:1329px;top:97px;font-size:12px;color:#6a6a6a;font-weight:normal;letter-spacing:0.3px;">All</div>
<div class="b" style="left:1580px;top:94px;width:17px;height:16px;background:#2e2e2e;border:1px solid #232323;box-sizing:border-box;border-radius:0 3px 3px 0;"></div>
<svg class="b" style="left:1582px;top:95px" width="13" height="13" viewBox="0 0 13 13"><rect x="3.5" y="1" width="8.5" height="8.5" fill="none" stroke="#c0c0c0" stroke-width="1"/><rect x="1" y="8" width="4" height="4" fill="#2e2e2e" stroke="#c0c0c0" stroke-width="1"/><path d="M5.5 7.5L10 3M7.3 3H10V5.7" stroke="#c0c0c0" stroke-width="1" fill="none"/></svg>
<div class="b" style="left:1268px;top:112px;width:332px;height:478px;background:#3a3a3b;"></div>
<div class="b" style="left:1268px;top:112px;width:31px;height:478px;background:#333335;"></div>
<div class="b" style="left:1299px;top:112px;width:4px;height:478px;background:#363532;"></div>
<div class="b" style="left:1268px;top:112px;width:332px;height:15px;background:#2b2b2d;"></div>
<svg class="b" style="left:1301px;top:118px" width="9" height="8" viewBox="0 0 9 8"><polygon points="0,0 9,0 4.5,8" fill="#6a6a6a"/></svg>
<svg class="b" style="left:1314px;top:113px" width="14" height="14" viewBox="0 0 14 14">
<path d="M7 0.8L12.6 4V10L7 13.2L1.4 10V4Z" fill="#e0e0e0"/><path d="M7 3.2L10.4 5.1V8.9L7 10.8L3.6 8.9V5.1Z" fill="#2d2d2d"/><path d="M7 7V13M7 7L1.8 4.2M7 7L12.2 4.2" stroke="#e0e0e0" stroke-width="1.8"/></svg>
<div class="t" style="left:1332px;top:115px;font-size:12px;color:#d8d8d8;font-weight:bold;letter-spacing:0.15px;">SampleScene*</div>
<svg class="b" style="left:1586px;top:115px" width="4" height="11" viewBox="0 0 4 11"><circle cx="2" cy="1.7" r="1.3" fill="#c8c8c8"/><circle cx="2" cy="5.5" r="1.3" fill="#c8c8c8"/><circle cx="2" cy="9.3" r="1.3" fill="#c8c8c8"/></svg>
<svg class="b" style="left:1328px;top:130px" width="14" height="14" viewBox="0 0 14 14"><polygon points="7,0.8 13,3.8 13,10.2 7,13.2 1,10.2 1,3.8" fill="none" stroke="#c4c4c4" stroke-width="1.1"/><path d="M1 3.8L7 6.8L13 3.8M7 6.8V13.2" stroke="#c4c4c4" stroke-width="1.1" fill="none"/></svg>
<div class="t" style="left:1345px;top:131px;font-size:12px;color:#c4c4c4;font-weight:normal;letter-spacing:0.3px;">Directional Light</div>
<svg class="b" style="left:1328px;top:146px" width="14" height="14" viewBox="0 0 14 14"><polygon points="7,0.8 13,3.8 13,10.2 7,13.2 1,10.2 1,3.8" fill="none" stroke="#c4c4c4" stroke-width="1.1"/><path d="M1 3.8L7 6.8L13 3.8M7 6.8V13.2" stroke="#c4c4c4" stroke-width="1.1" fill="none"/></svg>
<div class="t" style="left:1345px;top:147px;font-size:12px;color:#c4c4c4;font-weight:normal;letter-spacing:0.3px;">Cube</div>
<div class="b" style="left:1299px;top:162px;width:2px;height:14px;background:#2f72a8;"></div>
<svg class="b" style="left:1316px;top:165px" width="7" height="9" viewBox="0 0 7 9"><polygon points="0,0 7,4.5 0,9" fill="#6a6a6a"/></svg>
<svg class="b" style="left:1328px;top:162px" width="14" height="14" viewBox="0 0 14 14"><polygon points="7,0.8 13,3.8 13,10.2 7,13.2 1,10.2 1,3.8" fill="#80d0f6"/><polygon points="7,0.8 13,3.8 7,6.8 1,3.8" fill="#90dafa"/><path d="M1.5 4L7 6.8L12.5 4M7 6.8V13" stroke="#243848" stroke-width="1" fill="none"/></svg>
<div class="t" style="left:1345px;top:163px;font-size:12px;color:#80b2ee;font-weight:normal;letter-spacing:0.3px;">OVRCameraRigInteraction</div>
<svg class="b" style="left:1589px;top:164px" width="6" height="10" viewBox="0 0 6 10"><path d="M1 1L5 5L1 9" stroke="#8a8a8a" stroke-width="1.2" fill="none"/></svg>
<div class="b" style="left:1268px;top:592px;width:332px;height:18px;background:#2a2a2c;border-radius:3px 3px 0 0;"></div>
<div class="b" style="left:1268px;top:592px;width:80px;height:18px;background:#3c3c3c;border-radius:3px 3px 0 0;"></div>
<div class="b" style="left:1268px;top:592px;width:80px;height:2px;background:#3a79bb;border-radius:3px 3px 0 0;"></div>
<svg class="b" style="left:1275px;top:597px" width="13" height="11" viewBox="0 0 13 11"><path d="M0.5 1.2C0.5 0.8 0.8 0.5 1.2 0.5H4.8L6.3 2H11.8C12.2 2 12.5 2.3 12.5 2.7V10C12.5 10.3 12.2 10.5 11.8 10.5H1.2C0.8 10.5 0.5 10.3 0.5 10Z" fill="#c4c4c4"/></svg>
<div class="t" style="left:1291px;top:597px;font-size:12px;color:#c4c4c4;font-weight:normal;letter-spacing:0.3px;">Project</div>
<svg class="b" style="left:1565px;top:595px" width="10" height="11" viewBox="0 0 10 11"><rect x="1" y="6" width="8.2" height="4.3" rx="0.6" fill="none" stroke="#c8c8c8" stroke-width="1.1"/><path d="M7.4 6V3.2A2.3 2.3 0 0 0 2.8 3.2V3.8" fill="none" stroke="#c8c8c8" stroke-width="1.1"/></svg>
<svg class="b" style="left:1584px;top:596px" width="4" height="11" viewBox="0 0 4 11"><circle cx="2" cy="1.7" r="1.3" fill="#c8c8c8"/><circle cx="2" cy="5.5" r="1.3" fill="#c8c8c8"/><circle cx="2" cy="9.3" r="1.3" fill="#c8c8c8"/></svg>
<div class="b" style="left:1268px;top:610px;width:332px;height:21px;background:#3e3e3c;"></div>
<div class="b" style="left:1268px;top:631px;width:332px;height:1px;background:#242424;"></div>
<svg class="b" style="left:1274px;top:615px" width="13" height="13" viewBox="0 0 13 13"><path d="M6.5 0.5V12.5M0.5 6.5H12.5" stroke="#d0d0d0" stroke-width="2"/></svg>
<svg class="b" style="left:1290px;top:619px" width="8" height="4.8" viewBox="0 0 8 4.8"><polygon points="0,0 8,0 4.0,4.8" fill="#c8c8c8"/></svg>
<div class="b" style="left:1313px;top:613px;width:167px;height:16px;background:#2a2a2a;border-radius:4px;border:1px solid #232323;box-sizing:border-box;"></div>
<svg class="b" style="left:1317px;top:617px" width="10" height="10" viewBox="0 0 10 10"><circle cx="4" cy="4" r="2.8" fill="none" stroke="#c8c8c8" stroke-width="1.4"/><path d="M6 6L9 9" stroke="#c8c8c8" stroke-width="1.6"/></svg>
<svg class="b" style="left:1461px;top:614px" width="13" height="13" viewBox="0 0 13 13"><rect x="3.5" y="1" width="8.5" height="8.5" fill="none" stroke="#c0c0c0" stroke-width="1"/><rect x="1" y="8" width="4" height="4" fill="#2e2e2e" stroke="#c0c0c0" stroke-width="1"/><path d="M5.5 7.5L10 3M7.3 3H10V5.7" stroke="#c0c0c0" stroke-width="1" fill="none"/></svg>
<div class="b" style="left:1480px;top:611px;width:1px;height:20px;background:#303030;"></div>
<div class="b" style="left:1505px;top:611px;width:1px;height:20px;background:#303030;"></div>
<div class="b" style="left:1531px;top:611px;width:1px;height:20px;background:#303030;"></div>
<div class="b" style="left:1557px;top:611px;width:1px;height:20px;background:#303030;"></div>
<svg class="b" style="left:1485px;top:613px" width="14" height="14" viewBox="0 0 14 14"><rect x="2" y="1" width="5" height="5" fill="#c8c8c8"/><circle cx="4.5" cy="10" r="3.2" fill="#c8c8c8"/><polygon points="9.5,4 13.5,10 5.5,10" fill="#c8c8c8"/></svg>
<svg class="b" style="left:1511px;top:614px" width="13" height="13" viewBox="0 0 13 13"><path d="M6.5 1H12V6.5L6 12.5L0.5 7Z" fill="#d0d0d0"/><circle cx="9.3" cy="3.7" r="1.1" fill="#3c3c3c"/></svg>
<svg class="b" style="left:1536px;top:613px" width="14" height="14" viewBox="0 0 14 14"><circle cx="7" cy="7" r="6.3" fill="#e0e0e0"/><path d="M7 3V8" stroke="#3c3c3c" stroke-width="1.8"/><circle cx="7" cy="10.3" r="1" fill="#3c3c3c"/></svg>
<svg class="b" style="left:1562px;top:614px" width="15" height="13" viewBox="0 0 15 13"><path d="M1 7C3 3.5 10 2.5 14 6C11 10 5 11 1 7Z" fill="none" stroke="#c0c0c0" stroke-width="1.1"/><circle cx="7.5" cy="7" r="1.8" fill="#c0c0c0"/><path d="M3 12L12 1" stroke="#c0c0c0" stroke-width="1.3"/></svg>
<div class="t" style="left:1580px;top:616px;font-size:12px;color:#c4c4c4;font-weight:normal;letter-spacing:0.3px;">34</div>
<div class="b" style="left:1268px;top:632px;width:332px;height:374px;background:#3a3a3c;"></div>
<div class="b" style="left:1268px;top:632px;width:332px;height:4px;background:#3a3a3a;"></div>
<div class="b" style="left:1268px;top:636px;width:332px;height:16px;background:#2c5d87;"></div>
<svg class="b" style="left:1271px;top:640px" width="9" height="8" viewBox="0 0 9 8"><polygon points="0,0 9,0 4.5,8" fill="#5e7fa0"/></svg>
<svg class="b" style="left:1284px;top:638px" width="15" height="12" viewBox="0 0 15 12"><path d="M0.5 1.2C0.5 0.8 0.8 0.5 1.2 0.5H4.8L6.3 2H11.3C11.7 2 12 2.3 12 2.7V4H3.5L0.5 11Z" fill="#e8e8e8"/><path d="M3.8 4.8H14.5L11.5 11.5H0.8Z" fill="#e8e8e8"/></svg>
<div class="t" style="left:1302px;top:638px;font-size:12px;color:#ffffff;font-weight:bold;letter-spacing:0.15px;">Assets</div>
<svg class="b" style="left:1286px;top:656px" width="7" height="9" viewBox="0 0 7 9"><polygon points="0,0 7,4.5 0,9" fill="#6a6a6a"/></svg>
<svg class="b" style="left:1299px;top:655px" width="13" height="11" viewBox="0 0 13 11"><path d="M0.5 1.2C0.5 0.8 0.8 0.5 1.2 0.5H4.8L6.3 2H11.8C12.2 2 12.5 2.3 12.5 2.7V10C12.5 10.3 12.2 10.5 11.8 10.5H1.2C0.8 10.5 0.5 10.3 0.5 10Z" fill="#c4c4c4"/></svg>
<div class="t" style="left:1315px;top:654px;font-size:12px;color:#c4c4c4;font-weight:normal;letter-spacing:0.3px;">Oculus</div>
<svg class="b" style="left:1286px;top:672px" width="7" height="9" viewBox="0 0 7 9"><polygon points="0,0 7,4.5 0,9" fill="#6a6a6a"/></svg>
<svg class="b" style="left:1299px;top:671px" width="13" height="11" viewBox="0 0 13 11"><path d="M0.5 1.2C0.5 0.8 0.8 0.5 1.2 0.5H4.8L6.3 2H11.8C12.2 2 12.5 2.3 12.5 2.7V10C12.5 10.3 12.2 10.5 11.8 10.5H1.2C0.8 10.5 0.5 10.3 0.5 10Z" fill="#c4c4c4"/></svg>
<div class="t" style="left:1315px;top:670px;font-size:12px;color:#c4c4c4;font-weight:normal;letter-spacing:0.3px;">Plugins</div>
<svg class="b" style="left:1286px;top:688px" width="7" height="9" viewBox="0 0 7 9"><polygon points="0,0 7,4.5 0,9" fill="#6a6a6a"/></svg>
<svg class="b" style="left:1299px;top:687px" width="13" height="11" viewBox="0 0 13 11"><path d="M0.5 1.2C0.5 0.8 0.8 0.5 1.2 0.5H4.8L6.3 2H11.8C12.2 2 12.5 2.3 12.5 2.7V10C12.5 10.3 12.2 10.5 11.8 10.5H1.2C0.8 10.5 0.5 10.3 0.5 10Z" fill="#c4c4c4"/></svg>
<div class="t" style="left:1315px;top:686px;font-size:12px;color:#c4c4c4;font-weight:normal;letter-spacing:0.3px;">Resources</div>
<svg class="b" style="left:1286px;top:704px" width="7" height="9" viewBox="0 0 7 9"><polygon points="0,0 7,4.5 0,9" fill="#6a6a6a"/></svg>
<svg class="b" style="left:1299px;top:703px" width="13" height="11" viewBox="0 0 13 11"><path d="M0.5 1.2C0.5 0.8 0.8 0.5 1.2 0.5H4.8L6.3 2H11.8C12.2 2 12.5 2.3 12.5 2.7V10C12.5 10.3 12.2 10.5 11.8 10.5H1.2C0.8 10.5 0.5 10.3 0.5 10Z" fill="#c4c4c4"/></svg>
<div class="t" style="left:1315px;top:702px;font-size:12px;color:#c4c4c4;font-weight:normal;letter-spacing:0.3px;">Scenes</div>
<svg class="b" style="left:1286px;top:720px" width="7" height="9" viewBox="0 0 7 9"><polygon points="0,0 7,4.5 0,9" fill="#6a6a6a"/></svg>
<svg class="b" style="left:1299px;top:719px" width="13" height="11" viewBox="0 0 13 11"><path d="M0.5 1.2C0.5 0.8 0.8 0.5 1.2 0.5H4.8L6.3 2H11.8C12.2 2 12.5 2.3 12.5 2.7V10C12.5 10.3 12.2 10.5 11.8 10.5H1.2C0.8 10.5 0.5 10.3 0.5 10Z" fill="#c4c4c4"/></svg>
<div class="t" style="left:1315px;top:718px;font-size:12px;color:#c4c4c4;font-weight:normal;letter-spacing:0.3px;">XR</div>
<svg class="b" style="left:1272px;top:736px" width="7" height="9" viewBox="0 0 7 9"><polygon points="0,0 7,4.5 0,9" fill="#6a6a6a"/></svg>
<svg class="b" style="left:1285px;top:735px" width="13" height="11" viewBox="0 0 13 11"><path d="M0.5 1.2C0.5 0.8 0.8 0.5 1.2 0.5H4.8L6.3 2H11.8C12.2 2 12.5 2.3 12.5 2.7V10C12.5 10.3 12.2 10.5 11.8 10.5H1.2C0.8 10.5 0.5 10.3 0.5 10Z" fill="#c4c4c4"/></svg>
<div class="t" style="left:1302px;top:734px;font-size:12px;color:#c4c4c4;font-weight:bold;letter-spacing:0.15px;">Packages</div>
<div class="b" style="left:1268px;top:1006px;width:332px;height:1px;background:#353535;"></div>
<div class="b" style="left:1268px;top:1007px;width:332px;height:19px;background:#3f3f3e;"></div>
<svg class="b" style="left:1273px;top:1011px" width="12" height="10" viewBox="0 0 13 11"><path d="M0.5 1.2C0.5 0.8 0.8 0.5 1.2 0.5H4.8L6.3 2H11.8C12.2 2 12.5 2.3 12.5 2.7V10C12.5 10.3 12.2 10.5 11.8 10.5H1.2C0.8 10.5 0.5 10.3 0.5 10Z" fill="#c4c4c4"/></svg>
<div class="t" style="left:1288px;top:1011px;font-size:12px;color:#c4c4c4;font-weight:normal;letter-spacing:0.3px;">Assets</div>
<div class="b" style="left:1602px;top:73px;width:314px;height:19px;background:#2a2a2c;border-radius:3px 3px 0 0;"></div>
<div class="b" style="left:1602px;top:73px;width:92px;height:19px;background:#3c3c3c;border-radius:3px 3px 0 0;"></div>
<svg class="b" style="left:1610px;top:77px" width="11" height="11" viewBox="0 0 11 11"><circle cx="5.5" cy="5.5" r="5.2" fill="#d0d0d0"/><rect x="4.6" y="4.5" width="1.8" height="4.5" fill="#3c3c3c"/><circle cx="5.5" cy="2.8" r="1" fill="#3c3c3c"/></svg>
<div class="t" style="left:1625px;top:78px;font-size:12px;color:#c4c4c4;font-weight:normal;letter-spacing:0.3px;">Inspector</div>
<svg class="b" style="left:1704px;top:76px" width="9" height="12" viewBox="0 0 9 12"><path d="M4.5 0.5C2.3 0.5 0.5 2.2 0.5 4.3C0.5 6 2 6.8 2.3 8.3H6.7C7 6.8 8.5 6 8.5 4.3C8.5 2.2 6.7 0.5 4.5 0.5Z" fill="#d0d0d0"/><rect x="2.6" y="9" width="3.8" height="2.3" fill="#d0d0d0"/></svg>
<div class="t" style="left:1719px;top:78px;font-size:12px;color:#c4c4c4;font-weight:normal;letter-spacing:0.3px;">Lighting</div>
<svg class="b" style="left:1880px;top:76px" width="10" height="11" viewBox="0 0 10 11"><rect x="1" y="6" width="8.2" height="4.3" rx="0.6" fill="none" stroke="#c8c8c8" stroke-width="1.1"/><path d="M7.4 6V3.2A2.3 2.3 0 0 0 2.8 3.2V3.8" fill="none" stroke="#c8c8c8" stroke-width="1.1"/></svg>
<svg class="b" style="left:1899px;top:77px" width="4" height="11" viewBox="0 0 4 11"><circle cx="2" cy="1.7" r="1.3" fill="#c8c8c8"/><circle cx="2" cy="5.5" r="1.3" fill="#c8c8c8"/><circle cx="2" cy="9.3" r="1.3" fill="#c8c8c8"/></svg>
<div class="b" style="left:1602px;top:92px;width:314px;height:54px;background:#3e3e3e;"></div>
<div class="b" style="left:1602px;top:145px;width:314px;height:2px;background:#242424;"></div>
<svg class="b" style="left:1611px;top:103px" width="25" height="21" viewBox="0 0 13 11"><path d="M0.5 1.2C0.5 0.8 0.8 0.5 1.2 0.5H4.8L6.3 2H11.8C12.2 2 12.5 2.3 12.5 2.7V10C12.5 10.3 12.2 10.5 11.8 10.5H1.2C0.8 10.5 0.5 10.3 0.5 10Z" fill="#d0d0d0"/></svg>
<div class="t" style="left:1648px;top:99px;font-size:13px;color:#a8a8a8;font-weight:normal;letter-spacing:0.6px;">Assets (Default Asset)</div>
<svg class="b" style="left:1905px;top:100px" width="4" height="11" viewBox="0 0 4 11"><circle cx="2" cy="1.7" r="1.3" fill="#c8c8c8"/><circle cx="2" cy="5.5" r="1.3" fill="#c8c8c8"/><circle cx="2" cy="9.3" r="1.3" fill="#c8c8c8"/></svg>
<div class="b" style="left:1869px;top:121px;width:42px;height:16px;background:#585858;border-radius:3px;"></div>
<div class="t" style="left:1875px;top:124px;font-size:12px;color:#d0d0d0;font-weight:normal;letter-spacing:0.3px;">Open</div>
<div class="b" style="left:1602px;top:147px;width:314px;height:808px;background:#39393a;"></div>
<div class="b" style="left:1602px;top:954px;width:314px;height:1px;background:#2c2c2c;"></div>
<div class="b" style="left:1602px;top:955px;width:314px;height:21px;background:#3e3e3e;"></div>
<div class="b" style="left:1602px;top:976px;width:314px;height:2px;background:#2a2a2a;"></div>
<div class="t" style="left:1609px;top:961.5px;font-size:12px;color:#c4c4c4;font-weight:bold;letter-spacing:0.15px;">Asset Labels</div>
<div class="b" style="left:1602px;top:978px;width:314px;height:48px;background:#3e3e3e;"></div>
<svg class="b" style="left:1892px;top:981px" width="19" height="16" viewBox="0 0 19 16"><ellipse cx="9.5" cy="8" rx="9.3" ry="7.8" fill="#244f8a"/><path d="M5 4.5H9.5L14 9L10 13L5.5 8.5Z" fill="#e8eef5"/><circle cx="7.3" cy="6.6" r="0.9" fill="#244f8a"/></svg>
<div class="t" style="left:1606px;top:1008.5px;font-size:12px;color:#b8b8b8;font-weight:normal;letter-spacing:0.3px;">AssetBundle</div>
<div class="b" style="left:1697px;top:1004px;width:151px;height:17px;background:#4b4b4b;border-radius:3px;border:1px solid #2a2a2a;box-sizing:border-box;"></div>
<div class="t" style="left:1700px;top:1007px;font-size:12px;color:#c4c4c4;font-weight:normal;letter-spacing:0.3px;">None</div>
<svg class="b" style="left:1836px;top:1010px" width="8" height="4.8" viewBox="0 0 8 4.8"><polygon points="0,0 8,0 4.0,4.8" fill="#c8c8c8"/></svg>
<div class="b" style="left:1856px;top:1004px;width:56px;height:17px;background:#4b4b4b;border-radius:3px;border:1px solid #2a2a2a;box-sizing:border-box;"></div>
<div class="t" style="left:1860px;top:1007px;font-size:12px;color:#c4c4c4;font-weight:normal;letter-spacing:0.3px;">None</div>
<svg class="b" style="left:1899px;top:1010px" width="8" height="4.8" viewBox="0 0 8 4.8"><polygon points="0,0 8,0 4.0,4.8" fill="#c8c8c8"/></svg>
<div class="b" style="left:0px;top:1026px;width:1916px;height:22px;background:#1b1b1d;"></div>
<div class="b" style="left:1810px;top:1027px;width:1px;height:21px;background:#232325;"></div>
<div class="b" style="left:1837px;top:1027px;width:1px;height:21px;background:#232325;"></div>
<div class="b" style="left:1863px;top:1027px;width:1px;height:21px;background:#232325;"></div>
<div class="b" style="left:1889px;top:1027px;width:1px;height:21px;background:#232325;"></div>
<svg class="b" style="left:1789px;top:1029px" width="18" height="16" viewBox="0 0 18 16"><path d="M3 13.5C1.5 13.5 1 11 1.6 8.5C2.3 5.5 4 4 5.3 4.8C7 6 9.5 13 12.2 13C13.6 13 14 11 13.3 8.5C12.6 6 11 5 9.6 6.3C8.2 7.5 6 13.5 3 13.5Z" fill="none" stroke="#cfcfcf" stroke-width="1.8"/><rect x="11.5" y="1" width="5.5" height="6" rx="1" fill="#e85555"/></svg>
<svg class="b" style="left:1816px;top:1030px" width="16" height="15" viewBox="0 0 16 15"><ellipse cx="8" cy="8.5" rx="4.3" ry="5.5" fill="#c8c8c8"/><path d="M1.5 5.5L4 7M14.5 5.5L12 7M1 9.5H4M15 9.5H12M2 13.5L4.5 11.5M14 13.5L11.5 11.5" stroke="#c8c8c8" stroke-width="1.4"/><path d="M1.5 0.5L14.5 14.5" stroke="#1b1b1d" stroke-width="2.2"/><path d="M1.5 0.5L14.5 14.5" stroke="#c8c8c8" stroke-width="0.9"/></svg>
<svg class="b" style="left:1842px;top:1030px" width="16" height="15" viewBox="0 0 16 15"><ellipse cx="8" cy="3.5" rx="5.5" ry="2.6" fill="#c8c8c8"/><path d="M2.5 6.8C2.5 9 13.5 9 13.5 6.8V5.5C13.5 7.5 2.5 7.5 2.5 5.5Z M2.5 10.2C2.5 12.4 13.5 12.4 13.5 10.2V8.8C13.5 10.8 2.5 10.8 2.5 8.8Z M2.5 13C2.5 15 13.5 15 13.5 13V11.8C13.5 13.8 2.5 13.8 2.5 11.8Z" fill="#c8c8c8"/><path d="M1 0.5L14.5 14.5" stroke="#1b1b1d" stroke-width="2.2"/><path d="M1 0.5L14.5 14.5" stroke="#c8c8c8" stroke-width="0.9"/></svg>
<svg class="b" style="left:1868px;top:1030px" width="16" height="15" viewBox="0 0 16 15"><path d="M3 4.5A6 6 0 0 1 13 4.5M13 10.5A6 6 0 0 1 3 10.5" fill="none" stroke="#c0c0c0" stroke-width="1.4"/><circle cx="8" cy="7" r="2.3" fill="#c0c0c0"/><rect x="6.8" y="9" width="2.4" height="2.5" fill="#c0c0c0"/><path d="M2 0.5L14 14.5" stroke="#1b1b1d" stroke-width="2.2"/><path d="M2 0.5L14 14.5" stroke="#c0c0c0" stroke-width="0.9"/></svg>
<svg class="b" style="left:1894px;top:1030px" width="15" height="15" viewBox="0 0 15 15"><circle cx="7.5" cy="7.5" r="6.2" fill="none" stroke="#c8c8c8" stroke-width="1.1"/><path d="M4.6 7.6L6.7 9.7L10.6 5.6" stroke="#c8c8c8" stroke-width="1.4" fill="none"/></svg>
</body></html>
